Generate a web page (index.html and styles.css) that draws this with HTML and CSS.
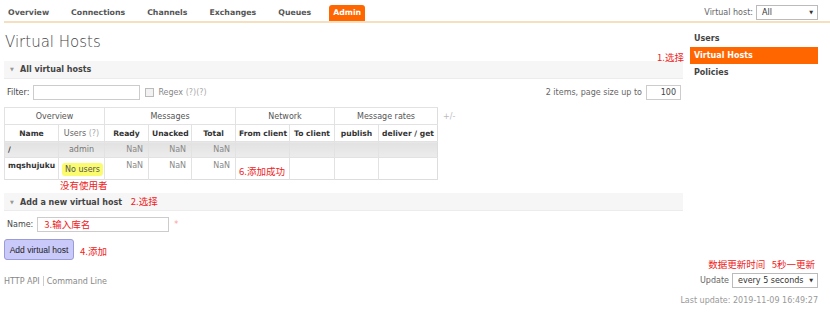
FILE: index.html
```html
<!DOCTYPE html>
<html>
<head>
  <title>RabbitMQ Management</title>
  <link rel="stylesheet" href="styles.css">
</head>
<body>
  <div class="topbar">
    <ul class="tabs">
      <li>Overview</li>
      <li>Connections</li>
      <li>Channels</li>
      <li>Exchanges</li>
      <li>Queues</li>
      <li class="active">Admin</li>
    </ul>
    <div class="vhost">
      <span>Virtual host:</span>
      <div class="select select-vhost">All <span class="caret">&#9660;</span></div>
    </div>
  </div>

  <div class="main">
    <div class="content">
      <h1>Virtual Hosts</h1>

      <div class="section">
        <h2><span class="arrow">&#9660;</span>All virtual hosts</h2>
        <div class="filter-row">
          <div class="filter-left">
            <label>Filter:</label>
            <div class="input input-filter"></div>
            <span class="checkbox"></span>
            <span class="muted">Regex <span class="help">(?)(?)</span></span>
          </div>
          <div class="filter-right">
            <span>2 items, page size up to</span>
            <div class="input input-page">100</div>
          </div>
        </div>

        <div class="table-wrap">
          <table class="list">
            <colgroup>
              <col class="w-name"><col class="w-users"><col class="w-ready">
              <col class="w-unacked"><col class="w-total"><col class="w-from">
              <col class="w-to"><col class="w-publish"><col class="w-deliver">
            </colgroup>
            <tr class="group">
              <th colspan="2">Overview</th>
              <th colspan="3">Messages</th>
              <th colspan="2">Network</th>
              <th colspan="2">Message rates</th>
            </tr>
            <tr class="cols">
              <th>Name</th>
              <th class="plain">Users <span class="help">(?)</span></th>
              <th>Ready</th>
              <th>Unacked</th>
              <th>Total</th>
              <th>From client</th>
              <th>To client</th>
              <th>publish</th>
              <th>deliver / get</th>
            </tr>
            <tr class="alt">
              <td class="name">/</td>
              <td class="c">admin</td>
              <td class="r">NaN</td>
              <td class="r">NaN</td>
              <td class="r">NaN</td>
              <td></td><td></td><td></td><td></td>
            </tr>
            <tr class="tall">
              <td class="name">mqshujuku</td>
              <td class="c"><span class="warn">No users</span></td>
              <td class="r">NaN</td>
              <td class="r">NaN</td>
              <td class="r">NaN</td>
              <td><span class="red note-ok">6.添加成功</span></td>
              <td></td><td></td><td></td>
            </tr>
          </table>
          <span class="plusminus">+/-</span>
        </div>
        <div class="red note-users">没有使用者</div>
      </div>

      <div class="section section-add">
        <h2><span class="arrow">&#9660;</span>Add a new virtual host <span class="red note-inline">2.选择</span></h2>
        <div class="form-row">
          <label>Name:</label>
          <div class="input input-name"><span class="red">3.输入库名</span></div>
          <span class="star">*</span>
        </div>
        <div class="button-row">
          <button class="btn">Add virtual host</button>
          <span class="red note-inline">4.添加</span>
        </div>
      </div>
    </div>

    <div class="sidebar">
      <span class="red note-side">1.选择</span>
      <ul class="subnav">
        <li>Users</li>
        <li class="active">Virtual Hosts</li>
        <li>Policies</li>
      </ul>
    </div>
  </div>

  <div class="footer">
    <div class="links">
      <span>HTTP API</span>
      <span class="sep"></span>
      <span>Command Line</span>
    </div>
    <div class="update">
      <div class="red note-update">数据更新时间&nbsp;&nbsp;&nbsp;5秒一更新</div>
      <div class="update-row">
        <span>Update</span>
        <div class="select select-update">every 5 seconds <span class="caret">&#9660;</span></div>
      </div>
      <div class="last">Last update: 2019-11-09 16:49:27</div>
    </div>
  </div>
</body>
</html>
```

FILE: styles.css
```css
body {
  margin: 0;
  font-family: "DejaVu Sans", Verdana, sans-serif;
  font-size: 8px;
  color: #484848;
}
.red {
  color: #ee2222;
  font-family: "Noto Sans CJK SC", "DejaVu Sans", sans-serif;
  font-size: 9.5px;
}
.muted {
  color: #888;
}
.help {
  color: #aaa;
}

/* top navigation */
.topbar {
  display: flex;
  justify-content: space-between;
  align-items: flex-end;
  height: 21px;
  margin-left: 4px;
  border-bottom: 2px solid #f6dfbf;
}
.tabs {
  display: flex;
  gap: 14px;
  list-style: none;
  margin: 0;
  padding: 0;
}
.tabs li {
  padding: 3px 4px;
  line-height: 10px;
  font-size: 7.8px;
  font-weight: bold;
  color: #555;
}
.tabs li.active {
  background: #ff6600;
  color: #fff;
  border-radius: 3px 3px 0 0;
}
.vhost {
  display: flex;
  align-items: center;
  gap: 3px;
  margin: 0 12px 1px 0;
  color: #666;
}
.select {
  position: relative;
  height: 13px;
  line-height: 13px;
  padding-left: 5px;
  border: 1px solid #bbb;
  background: #fff;
  color: #333;
}
.caret {
  position: absolute;
  right: 4px;
  top: 0;
  font-size: 5px;
}
.select-vhost {
  width: 55px;
}
.select-update {
  width: 79px;
}

/* page layout */
.main {
  display: flex;
  gap: 7px;
  padding: 0 12px 0 4px;
}
.content {
  flex: 1;
}
h1 {
  margin: 10px 0 0 1px;
  font-size: 15px;
  line-height: 19px;
  font-weight: 300;
  color: #444;
}
.section h2 {
  margin: 9px 0 0;
  height: 17px;
  line-height: 17px;
  font-size: 8px;
  font-weight: bold;
  color: #444;
  background: #f6f6f6;
  border-bottom: 1px solid #ececec;
}
.arrow {
  display: inline-block;
  width: 16px;
  text-align: center;
  font-size: 5px;
  color: #999;
  vertical-align: 1px;
}
.note-inline {
  margin-left: 6px;
  font-weight: normal;
}

/* filter */
.filter-row {
  display: flex;
  justify-content: space-between;
  align-items: center;
  margin-top: 6px;
}
.filter-left,
.filter-right {
  display: flex;
  align-items: center;
  gap: 4px;
}
.filter-left label {
  padding-left: 3px;
}
.input {
  height: 13px;
  line-height: 13px;
  border: 1px solid #ccc;
  background: #fff;
}
.input-filter {
  width: 105px;
}
.checkbox {
  width: 7px;
  height: 7px;
  border: 1px solid #bbb;
  background: #f2f2f2;
  margin-left: 1px;
}
.filter-right {
  padding-right: 2px;
  color: #666;
}
.input-page {
  width: 29px;
  padding-right: 4px;
  text-align: right;
  color: #444;
}

/* table */
.table-wrap {
  display: flex;
  align-items: flex-start;
  gap: 5px;
  margin-top: 7px;
}
.list {
  width: 434px;
  border-collapse: collapse;
  border: 1px solid #ddd;
  table-layout: fixed;
}
.w-name { width: 54px; }
.w-users { width: 46px; }
.w-ready { width: 44px; }
.w-unacked { width: 43px; }
.w-total { width: 44px; }
.w-from { width: 54px; }
.w-to { width: 45px; }
.w-publish { width: 44px; }
.w-deliver { width: 59px; }
.list th,
.list td {
  padding: 0 3px;
  border-left: 1px solid #e2e2e2;
  border-top: 1px solid #e2e2e2;
  white-space: nowrap;
  overflow: hidden;
}
.group th {
  height: 16px;
  font-weight: normal;
  color: #555;
}
.cols th {
  height: 16px;
  font-size: 7.6px;
  font-weight: bold;
  color: #333;
}
.cols th.plain {
  font-size: 8px;
  font-weight: normal;
  color: #666;
}
.alt td {
  height: 15px;
  background: linear-gradient(#e2e2e2, #ececec);
}
.tall td {
  height: 18px;
  vertical-align: top;
  padding-top: 3px;
}
.list td.name {
  font-size: 7.6px;
  font-weight: bold;
  color: #333;
  padding-left: 3px;
}
.list td.c {
  text-align: center;
  color: #777;
}
.list td.r {
  text-align: right;
  padding-right: 5px;
  color: #888;
}
.warn {
  display: inline-block;
  margin-top: 2px;
  padding: 2px 3px;
  background: #fbfb70;
  border-radius: 3px;
  color: #555;
}
.tall td .note-ok {
  display: inline-block;
  margin: 3px 0 0 0;
}
.plusminus {
  margin-top: 5px;
  color: #bbb;
}
.note-users {
  padding-left: 56px;
  line-height: 11px;
}

/* add form */
.section-add h2 {
  margin-top: 2px;
}
.form-row {
  display: flex;
  align-items: center;
  gap: 4px;
  margin-top: 6px;
}
.form-row label {
  padding-left: 3px;
}
.input-name {
  width: 124px;
  padding-left: 6px;
  line-height: 12px;
}
.star {
  margin-left: 1px;
  color: #f99;
}
.button-row {
  display: flex;
  align-items: center;
  margin-top: 7px;
}
.btn {
  width: 70px;
  height: 21px;
  padding: 0;
  font-family: "Liberation Sans", Arial, sans-serif;
  font-size: 8.5px;
  color: #222;
  background: #c9c9fa;
  border: 1px solid #9b9bd8;
  border-radius: 3px;
}
.button-row .note-inline {
  margin-top: 2px;
}

/* sidebar */
.sidebar {
  position: relative;
  width: 128px;
  padding-top: 7px;
}
.note-side {
  position: absolute;
  right: calc(100% + 6px);
  top: 27px;
  white-space: nowrap;
}
.subnav {
  list-style: none;
  margin: 0;
  padding: 0;
}
.subnav li {
  padding: 4px 4px;
  line-height: 9px;
  font-weight: bold;
  color: #444;
}
.subnav li.active {
  background: #ff6600;
  color: #fff;
}

/* footer */
.footer {
  display: flex;
  justify-content: space-between;
  padding: 0 12px 0 4px;
}
.links {
  display: flex;
  align-items: center;
  gap: 3px;
  margin-top: 16px;
  height: 10px;
  color: #888;
}
.sep {
  width: 1px;
  height: 10px;
  background: #ccc;
}
.update {
  display: flex;
  flex-direction: column;
  align-items: flex-end;
}
.note-update {
  padding-right: 3px;
  line-height: 12px;
  margin-top: -2px;
}
.update-row {
  display: flex;
  align-items: center;
  gap: 3px;
  margin-top: 3px;
  color: #666;
}
.last {
  margin-top: 8px;
  color: #999;
}
```
